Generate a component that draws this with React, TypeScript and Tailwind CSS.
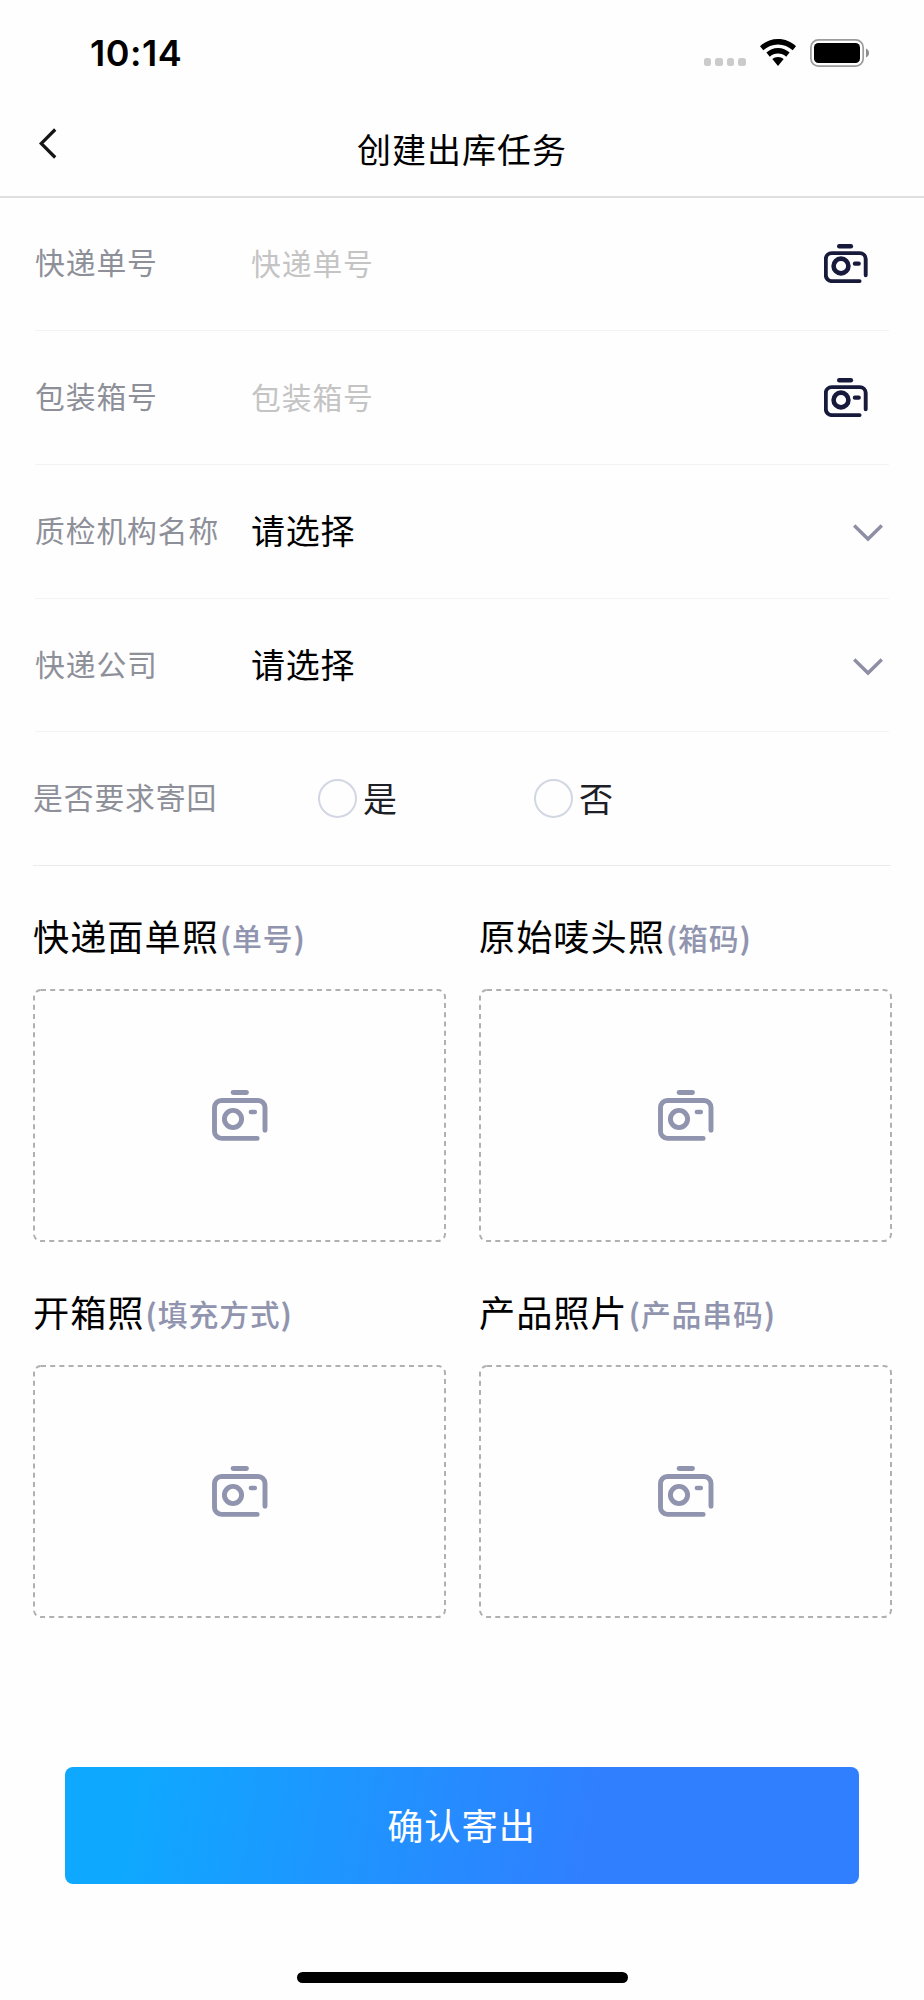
import type { ReactNode } from 'react';

const formFields = [
  { label: '快递单号', placeholder: '快递单号' },
  { label: '包装箱号', placeholder: '包装箱号' },
];

const selectFields = [{ label: '质检机构名称' }, { label: '快递公司' }];

const photos = [
  { title: '快递面单照', hint: '单号' },
  { title: '原始唛头照', hint: '箱码' },
  { title: '开箱照', hint: '填充方式' },
  { title: '产品照片', hint: '产品串码' },
];

function ScanIcon() {
  return (
    <svg width="44" height="39" viewBox="0 0 44 39" fill="none" stroke="#171a3b" strokeLinecap="round">
      <path d="M15.2 2.2H26.9" strokeWidth="4.4" />
      <path d="M35.6 37.1H7.8a6 6 0 0 1-6-6V15.1a6 6 0 0 1 6-6H35.7a6 6 0 0 1 6 6V31.2" strokeWidth="3.9" />
      <circle cx="17" cy="22" r="7.4" strokeWidth="4.6" />
      <path d="M30.9 19.7H34.7" strokeWidth="4.3" />
    </svg>
  );
}

function PhotoIcon() {
  return (
    <svg width="56" height="51" viewBox="0 0 56 51" fill="none" stroke="#9094ae" strokeLinecap="round">
      <path d="M21.1 2.5H34.5" strokeWidth="4.8" />
      <path d="M45.2 48.4H9.5a7 7 0 0 1-7-7V17.5a7 7 0 0 1 7-7H46a7 7 0 0 1 7 7V40.2" strokeWidth="4.9" />
      <circle cx="21" cy="29" r="8.6" strokeWidth="4.9" />
      <path d="M38.9 22H42.8" strokeWidth="4.6" />
    </svg>
  );
}

function ChevronDown() {
  return (
    <svg width="30" height="18" viewBox="0 0 30 18" fill="none" stroke="#8e8ea5" strokeWidth="3.4">
      <path d="M1.2 1.5L15 15L28.8 1.5" />
    </svg>
  );
}

function StatusBar() {
  return (
    <div className="flex h-[105px] items-center justify-between pl-[90px] pr-[55px]">
      <span className="font-[Inter] text-[36px] leading-none font-semibold tracking-[0.5px] text-black">10:14</span>
      <div className="flex items-center">
        <div className="mt-[19px] mr-[14px] flex gap-1">
          {[0, 1, 2, 3].map((i) => (
            <i key={i} className="h-[7.6px] w-[7.6px] rounded-[2.5px] bg-[#cbcbcb]" />
          ))}
        </div>
        <svg width="36" height="27" viewBox="0 0 36 27" className="mr-[14px]">
          <path d="M18 0C25 0 31.4 2.7 36 7.2L32.7 11.3C28.8 7.5 23.6 5.4 18 5.4S7.2 7.5 3.3 11.3L0 7.2C4.6 2.7 11 0 18 0Z" />
          <path d="M18 9C22.5 9 26.5 10.7 29.6 13.6L26.2 17.7C24 15.7 21.1 14.5 18 14.5S12 15.7 9.8 17.7L6.4 13.6C9.5 10.7 13.5 9 18 9Z" />
          <path d="M18 18C20.2 18 22.2 18.8 23.7 20.1L18 27L12.3 20.1C13.8 18.8 15.8 18 18 18Z" />
        </svg>
        <svg width="59" height="28" viewBox="0 0 59 28">
          <rect x="0.9" y="0.9" width="52.3" height="26.2" rx="7.5" fill="none" stroke="#9c9c9c" strokeWidth="1.7" />
          <rect x="4" y="4" width="46" height="20" rx="4.5" />
          <path d="M56 9.5C57.8 10.3 59 12 59 14S57.8 17.7 56 18.5Z" fill="#8d8d8d" />
        </svg>
      </div>
    </div>
  );
}

function NavBar() {
  return (
    <header className="grid h-[93px] grid-cols-[1fr_auto_1fr] border-b-2 border-[#dfdfdf] pl-[39px]">
      <svg width="18" height="31" viewBox="0 0 18 31" fill="none" stroke="#151515" strokeWidth="3.2" className="mt-[23px]">
        <path d="M16.2 1.5L2.2 15.5L16.2 29.5" />
      </svg>
      <h1 className="mt-[18px] mr-[39px] text-[34px] leading-[52px] tracking-[1px] text-black">创建出库任务</h1>
    </header>
  );
}

function FormRow({ label, line = 'border-[#f3f3f4]', children }: { label: string; line?: string; children: ReactNode }) {
  return (
    <div className={`flex h-[133.8px] items-center border-b ${line}`}>
      <span className="mb-[3px] w-[216px] shrink-0 text-[29.8px] leading-none tracking-[0.9px] text-[#8e9099]">{label}</span>
      {children}
    </div>
  );
}

function RadioOption({ text }: { text: string }) {
  return (
    <label className="flex w-[216px] items-center gap-[6px] text-[34px] leading-none text-[#1d1e26]">
      <span className="h-[39px] w-[39px] rounded-full border-2 border-[#d3d6e3]" />
      <span className="mb-px">{text}</span>
    </label>
  );
}

function PhotoBox({ title, hint }: { title: string; hint: string }) {
  return (
    <section>
      <h2 className="flex h-[56px] items-center pb-[4px] text-[36.2px] leading-none tracking-[1px] text-black">
        {title}
        <span className="mt-[6px] ml-px flex text-[29.8px] font-medium tracking-[0.9px] text-[#9094ae]">
          <b>(</b>
          {hint}
          <b>)</b>
        </span>
      </h2>
      <div className="relative mt-[24px] flex h-[253px] items-center justify-center">
        <svg className="absolute inset-0 h-full w-full" fill="none" stroke="#b0b0b0">
          <rect x="1" y="1" width="411" height="251" rx="7" strokeWidth="2" strokeDasharray="5 4.2" />
        </svg>
        <PhotoIcon />
      </div>
    </section>
  );
}

export default function App() {
  return (
    <div className="flex h-[2000px] w-[924px] flex-col bg-[#fefefe] font-['Noto_Sans_CJK_SC',sans-serif]">
      <StatusBar />
      <NavBar />
      <main className="-mt-[0.8px] flex flex-col">
        <div className="px-[35px]">
          {formFields.map((field) => (
            <FormRow key={field.label} label={field.label}>
              <span className="mb-[2px] grow text-[29.8px] leading-none tracking-[0.9px] text-[#c4c4c4]">{field.placeholder}</span>
              <div className="mr-[21px]">
                <ScanIcon />
              </div>
            </FormRow>
          ))}
          {selectFields.map((field) => (
            <FormRow key={field.label} label={field.label}>
              <span className="mb-[2px] grow text-[34px] leading-none tracking-[0.8px] text-black">请选择</span>
              <div className="mt-[4px] mr-[6px]">
                <ChevronDown />
              </div>
            </FormRow>
          ))}
        </div>
        <div className="px-[33px]">
          <FormRow label="是否要求寄回" line="border-[#ebebed]">
            <div className="ml-[69px] flex">
              <RadioOption text="是" />
              <RadioOption text="否" />
            </div>
          </FormRow>
        </div>
        <div className="mt-[43px] grid grid-cols-[413px_413px] gap-x-[33px] gap-y-[43px] px-[33px]">
          {photos.map((photo) => (
            <PhotoBox key={photo.title} title={photo.title} hint={photo.hint} />
          ))}
        </div>
      </main>
      <button className="mx-[65px] mt-[148.5px] h-[117px] rounded-[8px] bg-[linear-gradient(100deg,#0fa8ff_9%,#307fff_66%)] pr-px pb-[2px] text-[36.2px] tracking-[1px] text-white">
        确认寄出
      </button>
      <div className="mx-auto mt-[88.5px] h-[11px] w-[331px] rounded-full bg-black" />
    </div>
  );
}
